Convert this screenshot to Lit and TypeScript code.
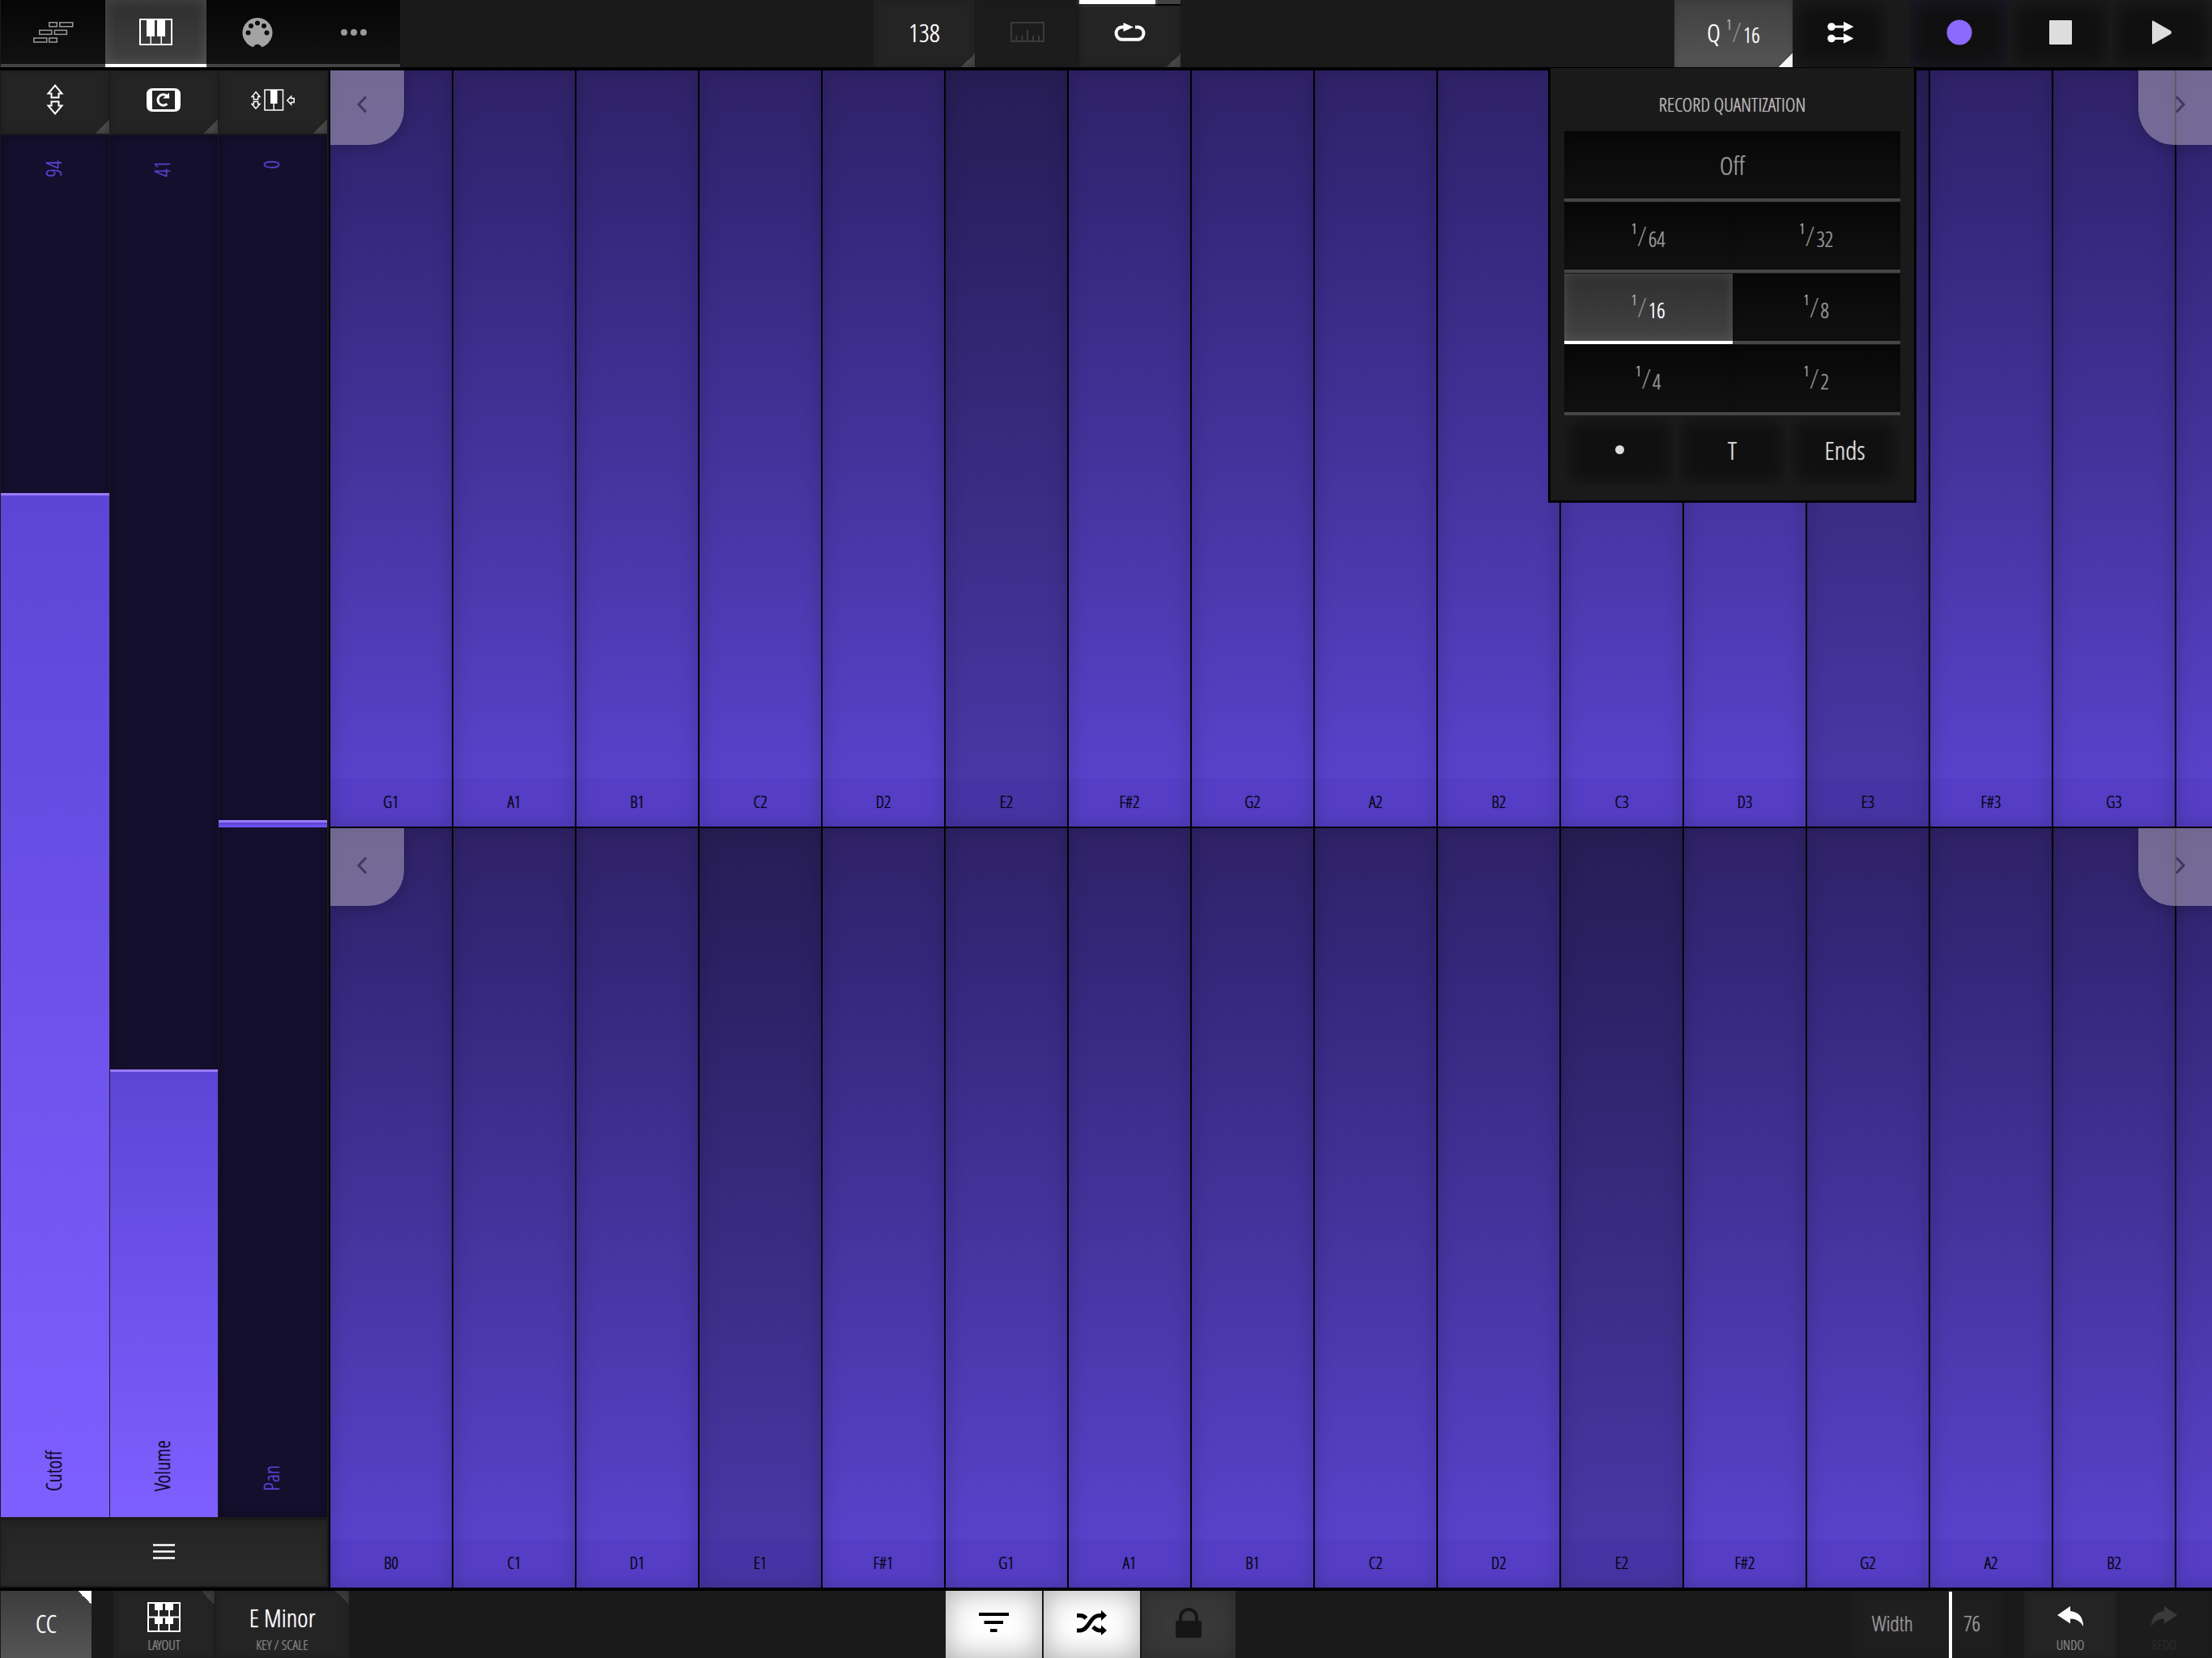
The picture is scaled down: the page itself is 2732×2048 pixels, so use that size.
import { LitElement, html, svg, css, nothing } from "lit";
import { customElement, property, state } from "lit/decorators.js";
import { classMap } from "lit/directives/class-map.js";
import { styleMap } from "lit/directives/style-map.js";

const icon = (w: number, h: number, body: unknown) =>
  html`<svg width=${w} height=${h} viewBox="0 0 ${w} ${h}" aria-hidden="true">${body}</svg>`;

const icons = {
  bricks: icon(50, 26, svg`<g fill="none" stroke="#9a9a9a" stroke-width="1.5">
    <rect x="19.8" y="0.8" width="9.5" height="5"/><rect x="32.8" y="0.8" width="16" height="5"/>
    <rect x="7.8" y="10.4" width="15" height="5"/><rect x="26.4" y="10.4" width="15" height="5"/>
    <rect x="0.8" y="20" width="16" height="5"/><rect x="19.8" y="20" width="9.5" height="5"/></g>`),
  keys: icon(41, 33, svg`<rect x="1" y="1" width="39" height="31" fill="none" stroke="#fff" stroke-width="2"/>
    <path d="M9 1h10v21h-4v10h-1.500V22H9zM22 1h10v21h-4v10h-1.500V22H22z" fill="#fff"/>`),
  midi: icon(38, 38, svg`<path d="M14 37.2A18.5 18.5 0 1 1 24 37.2A5.3 5.3 0 0 0 14 37.2Z" fill="#a3a3a3"/>
    <g fill="#0c0c0c"><circle cx="7.5" cy="19.5" r="3"/><circle cx="11" cy="11" r="3"/><circle cx="19" cy="7.5" r="3"/>
    <circle cx="27" cy="11" r="3"/><circle cx="30.5" cy="19.5" r="3"/></g>`),
  dots: icon(32, 8, svg`<g fill="#999"><circle cx="4" cy="4" r="4"/><circle cx="16" cy="4" r="4"/><circle cx="28" cy="4" r="4"/></g>`),
  ruler: icon(42, 25, svg`<path d="M1 1h40v23H1zM7.5 17v7M14.5 17v7M21 10v14M28 17v7M35 17v7" fill="none" stroke="#3a3a3a" stroke-width="2"/>`),
  loop: icon(42, 24, svg`<path d="M27 5.5H31A7.7 7.7 0 0 1 31 20.7H10A7.7 7.7 0 0 1 10 5.5H14" fill="none" stroke="#fff" stroke-width="4"/>
    <path d="M12.5 0 25 5.5 12.5 11z" fill="#fff"/>`),
  reorder: icon(32, 28, svg`<path d="M5 7h16M5 21.5h16" stroke="#fff" stroke-width="3"/>
    <path d="M20 0.8 32.5 7 20 13.2zM20 15.3 32.5 21.5 20 27.7z" fill="#fff"/>
    <circle cx="5" cy="7" r="4.8" fill="#fff"/><circle cx="5" cy="21.5" r="4.8" fill="#fff"/>`),
  record: icon(32, 32, svg`<circle cx="16" cy="16" r="15.5" fill="#8c6aff"/>`),
  stop: icon(28, 30, svg`<rect width="28" height="30" rx="1" fill="#ddd"/>`),
  play: icon(24, 30, svg`<path d="M0 1.5Q0 0 1.5 0.8L23 13Q25 15 23 17L1.5 29.2Q0 30 0 28.5Z" fill="#ddd"/>`),
  pitch: icon(22, 40, svg`<g fill="none" stroke="#fff" stroke-width="2"><path d="M11 2.500 19.500 12.500H15.500V17.500H6.500V12.500H2.500Z"/>
    <path d="M11 37.500 19.500 27.500H15.500V22.500H6.500V27.500H2.500Z"/></g>`),
  controller: icon(42, 29, svg`<path fill-rule="evenodd" d="M8 0H34Q42 0 42 8V21Q42 29 34 29H8Q0 29 0 21V8Q0 0 8 0ZM7 3V26H35V3Z" fill="#fff"/>
    <path d="M25.4 19.2A6.7 6.7 0 1 1 25 9.3" fill="none" stroke="#fff" stroke-width="3"/><path d="M20 12.4 28.2 12.6 27.8 5.6Z" fill="#fff"/>`),
  pitchKeys: icon(54, 27, svg`<g fill="none" stroke="#fff" stroke-width="1.5"><path d="M6 3.6 11 9.6H8.6V12.8H3.4V9.6H1Z"/>
    <path d="M6 24 11 18.4H8.6V15.4H3.4V18.4H1Z"/><rect x="17" y="1" width="22.5" height="25"/><path d="M28.2 17V26"/>
    <path d="M44.8 14 49.6 9V11.6H53.2V16.4H49.6V19Z"/></g><rect x="24" y="1" width="8.5" height="17" fill="#fff"/>`),
  menu: icon(27, 19, svg`<path d="M0 1.5H27M0 9.5H27M0 17.5H27" stroke="#fff" stroke-width="2.6"/>`),
  layout: icon(41, 37, svg`<path d="M1 1h39v35H1zM1 18.5h39M14 1v35M27 1v35" fill="none" stroke="#fff" stroke-width="2"/>
    <path d="M9 1h10v9H9zM22 1h10v9H22zM9 18h10v9H9zM22 18h10v9H22z" fill="#fff"/>`),
  filter: icon(37, 25, svg`<path d="M0 2H37M6.500 12H30M14 22H22.500" stroke="#000" stroke-width="4"/>`),
  shuffle: icon(37, 31, svg`<g fill="none" stroke="#000" stroke-width="5"><path d="M0 25H4C15 25 16 6.500 28 6.500H31"/>
    <path d="M0 6.500H4Q8.500 6.500 11.500 10"/><path d="M20 20.500Q24 25 29 25H31"/></g>
    <path d="M30 0 37 6.500 30 13zM30 18.500 37 25 30 31z" fill="#000"/>`),
  lock: icon(32, 37, svg`<path d="M6 17V12A10 10 0 0 1 26 12V17" fill="none" stroke="#161616" stroke-width="4"/>
    <rect y="16" width="32" height="21" rx="2" fill="#161616"/>`),
  undo: icon(32, 26, svg`<path d="M0 11 16 0V6Q32 8 32 25Q27 15.500 16 15.500V21.500Z" fill="#fff"/>`),
  redo: icon(32, 26, svg`<path d="M32 11 16 0V6Q0 8 0 25Q5 15.500 16 15.500V21.500Z" fill="#3a3a3a"/>`),
  prev: icon(14, 22, svg`<path d="M12 1.500 3 11 12 20.500" fill="none" stroke="#41375f" stroke-width="3"/>`),
  next: icon(14, 22, svg`<path d="M2 1.500 11 11 2 20.500" fill="none" stroke="#41375f" stroke-width="3"/>`),
};

const FONT = css`"Avenir Next Condensed", "Open Sans Condensed Light", "Open Sans Condensed", "Roboto Condensed", "Liberation Sans Narrow", "Liberation Sans", sans-serif`;

const shared = css`
  * { box-sizing: border-box; }
  button {
    appearance: none; border: 0; margin: 0; padding: 0; border-radius: 0;
    display: flex; align-items: center; justify-content: center;
    background: none; color: #fff; font: inherit; text-shadow: 0 0 1px currentColor; cursor: pointer;
  }
  svg { display: block; }
  input[type="range"] { appearance: none; margin: 0; background: transparent; cursor: pointer; }
  input[type="range"]::-webkit-slider-thumb { appearance: none; width: 1px; height: 1px; background: transparent; }
`;

@customElement("note-fraction")
class NoteFraction extends LitElement {
  @property() den = "";
  static styles = css`
    :host { display: inline-flex; align-items: flex-start; height: 36px; color: inherit; }
    .num { font-size: 18px; line-height: 16px; color: #bbb; text-shadow: 0 0 1px currentColor; }
    .slash { font-size: 34px; line-height: 34px; margin: 0 2px 0 0; color: #888; text-shadow: none; }
    .den { font-size: 26px; line-height: 30px; padding-top: 6px; }
  `;
  render() {
    return html`<span class="num">1</span><span class="slash">/</span><span class="den">${this.den}</span>`;
  }
}

@customElement("quantize-menu")
class QuantizeMenu extends LitElement {
  @state() private selected = "16";
  static styles = [shared, css`
    :host { display: block; background: #1a1a1a; border: 3px solid #000; border-top-width: 1px; padding: 0 17px 17px; }
    .title { margin: 0; height: 78px; padding-top: 12px; line-height: 66px; text-align: center; font-size: 24px; font-weight: inherit; color: #bbb; text-shadow: 0 0 1px currentColor; }
    .grid { display: grid; grid-template-columns: 1fr 1fr; row-gap: 1px; }
    .option {
      height: 87px; color: #999; font-size: 32px; border-bottom: 4px solid #464646;
      background: linear-gradient(#070707, #111); box-shadow: inset 0 0 8px #0003;
    }
    .wide { grid-column: 1 / -1; }
    .selected { color: #fff; background: linear-gradient(#2f2f2f, #424242); border-bottom-color: #fff; box-shadow: inset 0 0 14px #ffffff20; }
    .modes { display: grid; grid-template-columns: repeat(3, 1fr); gap: 2px; margin-top: 1px; }
    .mode { height: 87px; padding-bottom: 4px; font-size: 32px; color: #ddd; background: #101010; box-shadow: inset 0 0 24px 4px #1e1e1e; }
    .dot { width: 11px; height: 11px; border-radius: 50%; background: #ddd; }
  `];
  render() {
    return html`
      <h2 class="title">RECORD QUANTIZATION</h2>
      <div class="grid">
        <button class=${classMap({ option: true, wide: true, selected: this.selected === "off" })} @click=${() => (this.selected = "off")}>Off</button>
        ${["64", "32", "16", "8", "4", "2"].map((d) => html`
          <button class=${classMap({ option: true, selected: this.selected === d })}
            aria-pressed=${this.selected === d ? "true" : "false"} @click=${() => (this.selected = d)}>
            <note-fraction den=${d}></note-fraction>
          </button>`)}
      </div>
      <div class="modes">
        <button class="mode" aria-label="Dotted"><span class="dot"></span></button>
        <button class="mode">T</button>
        <button class="mode">Ends</button>
      </div>`;
  }
}

@customElement("cc-strip")
class CcStrip extends LitElement {
  @property() name = "";
  @property({ type: Number }) value = 0;
  @property({ type: Boolean }) bipolar = false;
  static styles = [shared, css`
    :host { display: block; min-height: 0; }
    .strip {
      position: relative; height: 100%; display: flex; flex-direction: column; justify-content: space-between; align-items: center;
      padding: 31px 4px 32px 0; background: #140f2d; box-shadow: inset 0 0 14px #0005; color: #5a42d0; font-size: 26px; line-height: 28px;
    }
    .fill { position: absolute; left: 0; right: 0; bottom: 0; background: linear-gradient(#5c45d6, #7e5fff); border-top: 3px solid #9a7af8; }
    .fill.center { top: 50%; bottom: auto; height: 9px; margin-top: -8px; background: linear-gradient(#5842d0, #7355f5); }
    .text { position: relative; writing-mode: vertical-rl; transform: rotate(180deg); pointer-events: none; text-shadow: 0 0 1px currentColor; }
    .over { color: #0c0820; }
    input { position: absolute; inset: 0; width: 100%; height: 100%; writing-mode: vertical-lr; direction: rtl; }
  `];
  render() {
    const share = (this.value / 127) * 100;
    return html`<div class="strip">
      ${this.bipolar
        ? html`<div class="fill center"></div>`
        : html`<div class="fill" style=${styleMap({ height: `calc(${share}% + 2px)` })}></div>`}
      <input id="cc" type="range" min=${this.bipolar ? -64 : 0} max="127" .value=${String(this.value)}
        @input=${(e: Event) => (this.value = Number((e.target as HTMLInputElement).value))} />
      <output class="text" for="cc">${this.value}</output>
      <label class=${classMap({ text: true, over: !this.bipolar })} for="cc">${this.name}</label>
    </div>`;
  }
}

@customElement("pad-row")
class PadRow extends LitElement {
  @property({ attribute: false }) notes: string[] = [];
  static styles = [shared, css`
    :host { display: block; position: relative; min-width: 0; min-height: 0; overflow: hidden; }
    .pads { display: flex; gap: 2px; height: 100%; background: #000; }
    .pad {
      flex: 0 0 150px; align-items: flex-end; color: #06040f; font-size: 21px;
      background: linear-gradient(#2f2267, #34277a 18%, #46349f 55%, #5942cb 94%);
      position: relative;
    }
    .pad::after { content: ""; position: absolute; inset: 0; box-shadow: inset 0 0 24px #0000002e; }
    .root { background: linear-gradient(#271d54, #2b2164 18%, #3a2b82 55%, #4937a6 94%); }
    .note { width: 100%; height: 59px; line-height: 57px; background: #3c1ea01f; }
    .scroll { position: absolute; top: 0; width: 91px; height: 96px; background: #a9a2b88f; box-shadow: 0 4px 20px #0003; }
    .prev { left: 0; border-bottom-right-radius: 44px; padding-right: 13px; padding-bottom: 4px; }
    .next { right: 0; border-bottom-left-radius: 44px; padding-left: 13px; padding-bottom: 4px; }
  `];
  render() {
    return html`<div class="pads">
        ${this.notes.map((n) => html`<button class=${classMap({ pad: true, root: /^E\d/.test(n) })} aria-label=${n || "Pad"}>
          <span class="note">${n || nothing}</span></button>`)}
      </div>
      <button class="scroll prev" aria-label="Lower notes">${icons.prev}</button>
      <button class="scroll next" aria-label="Higher notes">${icons.next}</button>`;
  }
}

@customElement("app-root")
class AppRoot extends LitElement {
  @state() private tab = 1;
  @state() private menuOpen = true;
  @state() private padWidth = 76;
  static styles = [shared, css`
    :host {
      display: grid; grid-template-rows: 83px minmax(0, 1fr) 83px; height: 100vh; overflow: hidden;
      background: #1a1a1a; color: #fff; font-family: ${FONT}; font-size: 32px; font-weight: 300;
    }
    .bar { display: flex; padding-left: 1px; background: #1a1a1a; position: relative; min-width: 0; }
    .top { z-index: 2; box-shadow: 0 4px 0 #000; }
    .bottom { box-shadow: 0 -4px 0 #000; }
    .bar > * { flex-shrink: 0; }
    .s1 { flex: 585 1 0; } .s2 { flex: 610 1 0; } .s3 { flex: 737 1 0; } .s4 { flex: 761 1 0; }
    .tab { width: 125px; height: 83px; background: linear-gradient(#050505, #111); border-bottom: 4px solid #444; }
    .tab.first { width: 129px; } .tab.last { width: 114px; }
    .tab.active { background: linear-gradient(#2e2e2e, #404040); border-bottom-color: #fff; box-shadow: inset 0 0 16px #ffffff24; }
    .cell { width: 125px; padding-bottom: 4px; background-color: #242424; box-shadow: inset 0 0 10px #1a1a1a80; }
    .corner { background-image: linear-gradient(135deg, transparent 50%, #4b4b4b 50%); background-size: 17px 17px; background-repeat: no-repeat; background-position: right bottom; }
    .corner-top { background-image: linear-gradient(45deg, transparent 50%, #3e3e3e 50%); background-size: 17px 17px; background-repeat: no-repeat; background-position: right top; }
    .ruler { width: 129px; background: #1c1c1c; }
    .loop { position: relative; }
    .progress { position: absolute; inset: 0 0 auto; height: 7px; background: #444; border-bottom: 2px solid #000; }
    .progress-value { display: block; width: 75%; height: 5px; background: #fff; box-shadow: 0 0 4px #fff8; }
    .quantize { position: relative; width: 146px; }
    .quantize-button {
      width: 100%; height: 83px; gap: 7px; padding-bottom: 4px; box-shadow: inset 0 0 10px #0002;
      background: linear-gradient(135deg, transparent 50%, #fff 50%) right bottom / 17px 17px no-repeat, linear-gradient(#404040, #555);
    }
    .popup { position: absolute; top: 83px; left: calc(50% - 229px); width: 455px; }
    .dark { background: #101010; box-shadow: inset 0 0 24px 3px #1e1e1e; width: 123px; margin-right: 2px; padding-bottom: 4px; }
    .dark.order { width: 118px; margin-right: 27px; }
    .dark.record { box-shadow: inset 0 0 24px 3px #1c1a28; width: 122px; }
    .dark.last { width: 124px; margin-right: 0; }

    .main { display: grid; grid-template-columns: 408px minmax(0, 1fr); min-height: 0; }
    .side { display: flex; flex-direction: column; min-height: 0; padding: 4px 2px 6px 1px; border-right: 2px solid #000; }
    .heads, .strips { display: grid; grid-template-columns: repeat(3, 1fr); gap: 1px; }
    .heads .cell { width: auto; height: 78px; padding-bottom: 6px; }
    .strips { flex: 1; min-height: 0; padding: 2px 0 4px; }
    .menu { height: 81px; padding-bottom: 4px; background: linear-gradient(#242424, #2b2b2b); box-shadow: inset 0 0 8px #1a1a1a80; }
    .rows { display: grid; grid-template-rows: 1fr 1fr; gap: 2px; background: #000; min-height: 0; padding-bottom: 4px; }

    .cc { width: 112px; background: linear-gradient(45deg, transparent 50%, #fff 50%) right top / 17px 17px no-repeat, linear-gradient(#3c3c3c, #555); margin-right: 27px; padding-bottom: 4px; }
    .stack { flex-direction: column; justify-content: flex-end; padding-bottom: 6px; margin-right: 1px; }
    .stack .what { height: 50px; display: flex; align-items: center; }
    .caption { font-size: 17px; line-height: 20px; color: #888; }
    .scale { width: 165px; margin-right: 0; }
    .lit { width: 119px; margin-right: 2px; padding-bottom: 4px; background: #fff; box-shadow: inset 0 0 36px #00000055; }
    .lock { width: 116px; padding-bottom: 4px; background: #383838; box-shadow: inset 0 0 24px #2a2a2a; }
    .width { position: relative; width: 186px; display: flex; align-items: center; justify-content: space-between; padding: 0 27px 4px 25px; margin-right: 27px; font-size: 26px; color: #999; background: #1f1f1f; box-shadow: inset 0 0 16px #1a1a1a; text-shadow: 0 0 1px currentColor; }
    .width::after { content: ""; position: absolute; left: 120px; top: 1px; bottom: 0; width: 4px; background: #fff; }
    .width input { position: absolute; inset: 0; width: 100%; height: 100%; }
    .undo { width: 114px; margin-right: 0; }
    .redo { width: 118px; margin-right: 0; background: #1c1c1c; }
    .redo .caption { color: #2c2c2c; }
  `];

  render() {
    const tabs = [["Arrange", icons.bricks], ["Keys", icons.keys], ["MIDI", icons.midi], ["More", icons.dots]] as const;
    const upper = ["G1", "A1", "B1", "C2", "D2", "E2", "F#2", "G2", "A2", "B2", "C3", "D3", "E3", "F#3", "G3", ""];
    const lower = ["B0", "C1", "D1", "E1", "F#1", "G1", "A1", "B1", "C2", "D2", "E2", "F#2", "G2", "A2", "B2", ""];
    return html`
      <header class="bar top">
        ${tabs.map(([label, glyph], i) => html`<button aria-label=${label}
          class=${classMap({ tab: true, first: i === 0, last: i === 3, active: this.tab === i })} @click=${() => (this.tab = i)}>${glyph}</button>`)}
        <span class="s1"></span>
        <button class="cell corner">138</button>
        <button class="cell ruler" aria-label="Metronome">${icons.ruler}</button>
        <button class="cell corner loop" aria-label="Loop"><span class="progress"><span class="progress-value"></span></span>${icons.loop}</button>
        <span class="s2"></span>
        <div class="quantize">
          <button class="quantize-button" aria-expanded=${this.menuOpen ? "true" : "false"} @click=${() => (this.menuOpen = !this.menuOpen)}>Q <note-fraction den="16"></note-fraction></button>
          ${this.menuOpen ? html`<quantize-menu class="popup"></quantize-menu>` : nothing}
        </div>
        <button class="dark order" aria-label="Follow">${icons.reorder}</button>
        <button class="dark record" aria-label="Record">${icons.record}</button>
        <button class="dark" aria-label="Stop">${icons.stop}</button>
        <button class="dark last" aria-label="Play">${icons.play}</button>
      </header>
      <main class="main">
        <aside class="side">
          <div class="heads">
            <button class="cell corner" aria-label="Pitch">${icons.pitch}</button>
            <button class="cell corner" aria-label="Controller">${icons.controller}</button>
            <button class="cell corner" aria-label="Key glide">${icons.pitchKeys}</button>
          </div>
          <div class="strips">
            <cc-strip name="Cutoff" value="94"></cc-strip>
            <cc-strip name="Volume" value="41"></cc-strip>
            <cc-strip name="Pan" value="0" bipolar></cc-strip>
          </div>
          <button class="menu" aria-label="Menu">${icons.menu}</button>
        </aside>
        <section class="rows">
          <pad-row .notes=${upper}></pad-row>
          <pad-row .notes=${lower}></pad-row>
        </section>
      </main>
      <footer class="bar bottom">
        <button class="cc">CC</button>
        <button class="cell corner-top stack"><span class="what">${icons.layout}</span><span class="caption">LAYOUT</span></button>
        <button class="cell corner-top stack scale"><span class="what">E Minor</span><span class="caption">KEY / SCALE</span></button>
        <span class="s3"></span>
        <button class="lit" aria-label="Filter">${icons.filter}</button>
        <button class="lit" aria-label="Shuffle">${icons.shuffle}</button>
        <button class="lock" aria-label="Lock">${icons.lock}</button>
        <span class="s4"></span>
        <div class="width">
          <label for="pad-width">Width</label>
          <input id="pad-width" type="range" min="0" max="127" .value=${String(this.padWidth)}
            @input=${(e: Event) => (this.padWidth = Number((e.target as HTMLInputElement).value))} />
          <output for="pad-width">${this.padWidth}</output>
        </div>
        <button class="cell stack undo"><span class="what">${icons.undo}</span><span class="caption">UNDO</span></button>
        <button class="cell stack redo"><span class="what">${icons.redo}</span><span class="caption">REDO</span></button>
      </footer>`;
  }
}
